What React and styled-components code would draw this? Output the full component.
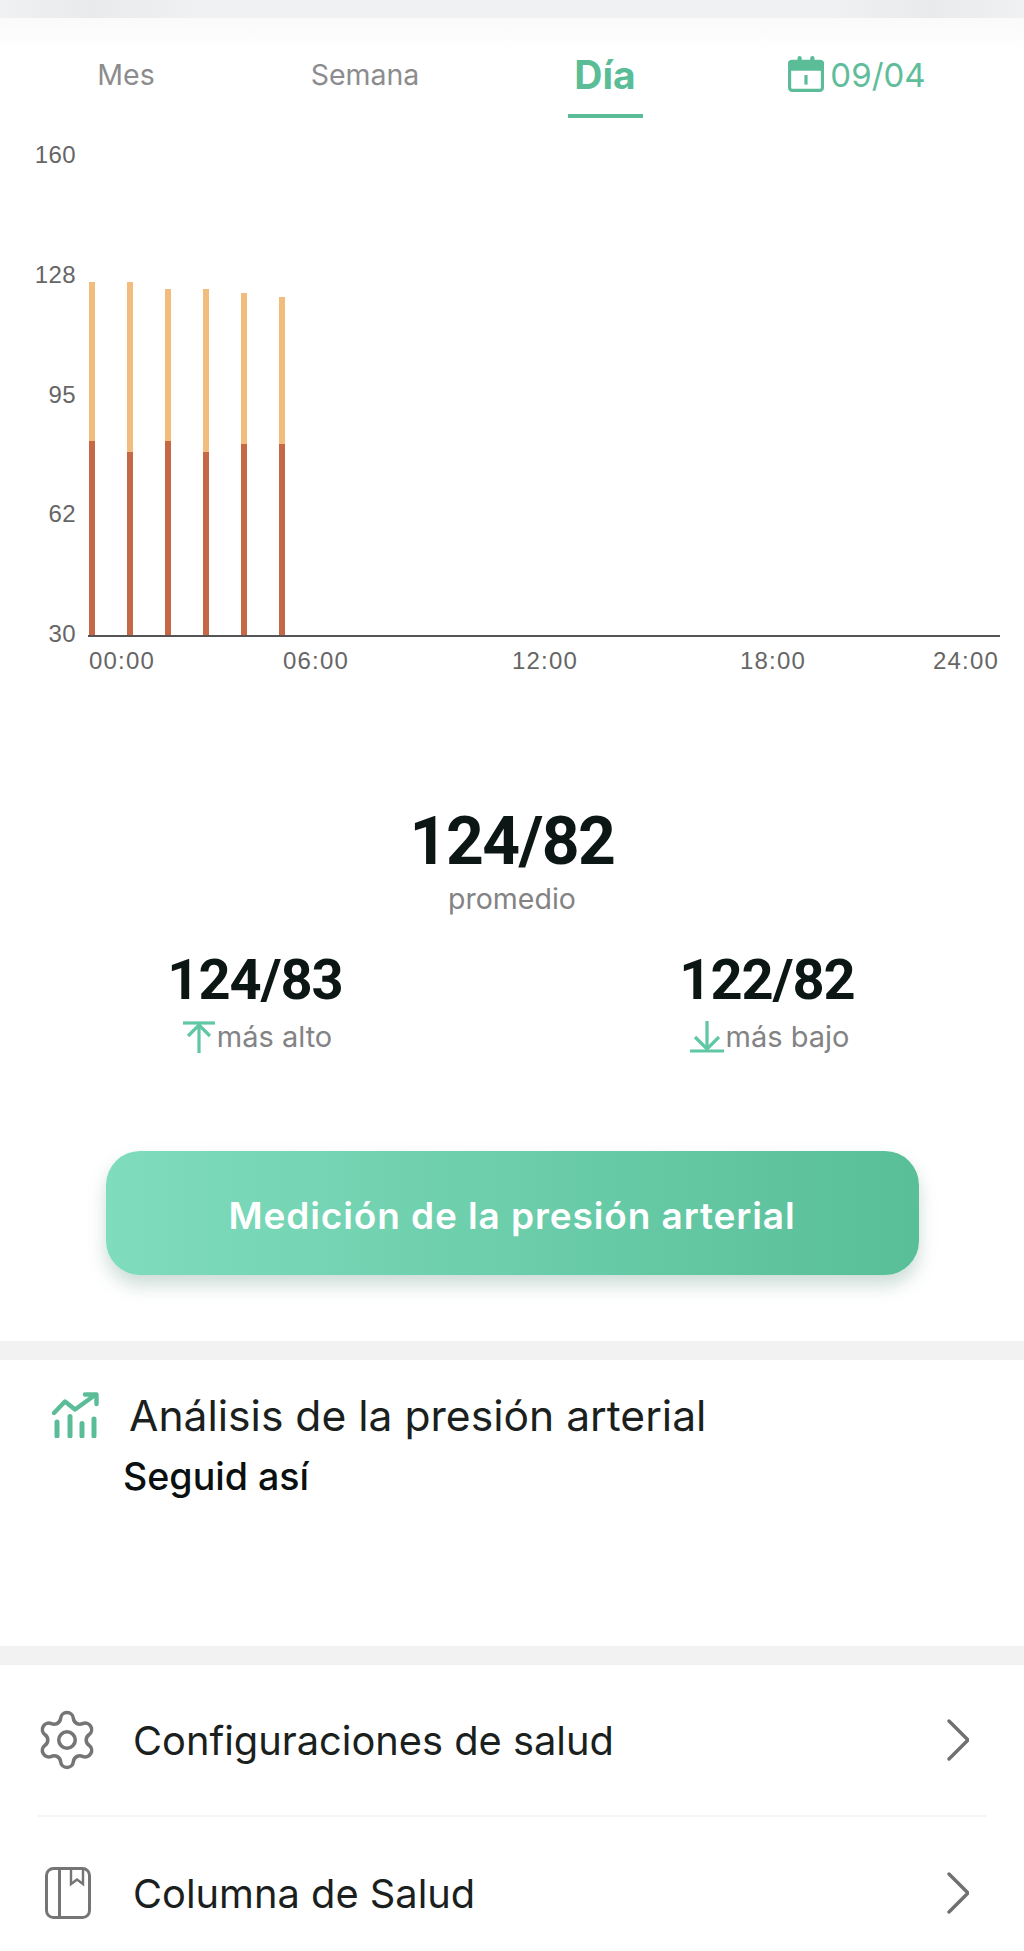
import React from 'react';
import styled, { createGlobalStyle } from 'styled-components';
import { Settings } from 'lucide-react';

const Global = createGlobalStyle`
  html, body { margin: 0; padding: 0; background: #fff; }
  * { box-sizing: border-box; }
  body { font-family: Inter, "Liberation Sans", Arial, sans-serif; }
`;
const Page = styled.div`
  width: 1024px; height: 1951px; overflow: hidden; background: #fff;
  display: flex; flex-direction: column;
`;
const TopBar = styled.div`
  height: 18px; flex: none;
  background: linear-gradient(90deg, #f0f1f2 0, #e9eaeb 90px, #f0f1f3 200px, #f0f1f3 830px, #e9eaeb 930px, #f0f1f2 100%);
`;
const TabFade = styled.div`
  height: 100px; flex: none;
  background: linear-gradient(180deg, #fafafa 0, #ffffff 34px);
  display: grid; grid-template-columns: 252px 226px 254px 250px; align-items: start;
`;
const Tab = styled.div`
  position: relative; height: 100px; display: flex; justify-content: center; align-items: center;
  padding-top: 12px; gap: 6px;
  color: ${p => p.$active ? '#5bbd98' : '#8c8c8e'};
  font-size: ${p => p.$active ? '39px' : '28.5px'};
  font-weight: ${p => p.$active ? 700 : 400};
`;
const Underline = styled.span`
  position: absolute; left: 50%; margin-left: -37px; top: 96px; width: 75px; height: 4px; background: #5bbd98;
`;
const DateText = styled.span`
  font-size: 33px; color: #5fbd9b; line-height: 1; margin-top: 2px;
`;
const Chart = styled.section`
  display: grid; grid-template-columns: 88px 912px; grid-template-rows: 495px auto; height: 689px; flex: none; padding-top: 24px; align-content: start;
`;
const YAxis = styled.div`
  height: 505px; display: flex; flex-direction: column; justify-content: space-between; align-items: flex-end; padding-right: 12px;
  font-family: "Liberation Sans", Arial, sans-serif; font-size: 24px; letter-spacing: 0.4px; line-height: 26px; color: #666;
`;
const Plot = styled.div`
  height: 495px; display: flex; align-items: flex-end; gap: 32px; padding-left: 1px;
  border-bottom: 2px solid #555;
`;
const Bar = styled.div`
  width: 6px; display: flex; flex-direction: column; background: #f2bc7d;
  height: ${p => p.$total}px; justify-content: flex-end;
`;
const BarLow = styled.div`
  background: #c66745; height: ${p => p.$h}px;
`;
const XAxis = styled.div`
  grid-column: 2; display: grid; grid-template-columns: 194px 229px 228px 193px auto; padding-left: 1px; margin-top: 10px;
  font-family: "Liberation Sans", Arial, sans-serif; font-size: 24px; line-height: 28px; letter-spacing: 1.2px; color: #666;
`;
const Stats = styled.section`
  height: 534px; flex: none; display: flex; flex-direction: column; align-items: center;
`;
const BigValue = styled.div`
  font-family: Roboto, sans-serif; font-weight: 700; font-size: 66px; line-height: 70px; color: #0c1614;
  letter-spacing: -1.5px;
`;
const Caption = styled.div`
  font-size: ${p => p.$size || 29}px; line-height: 34px; margin-top: ${p => p.$top || 0}px; padding-left: ${p => p.$indent || 0}px;
  color: #838385; display: flex; align-items: center; gap: 2px;
`;
const SubRow = styled.div`
  width: 100%; margin-top: 34px; display: grid; grid-template-columns: 510px 514px;
`;
const SubCell = styled.div`
  display: flex; flex-direction: column; align-items: center;
`;
const SubValue = styled(BigValue)`
  font-size: 56px; line-height: 60px; letter-spacing: -1px;
`;
const MeasureButton = styled.div`
  margin-top: 97px; width: 813px; height: 124px; border-radius: 34px; flex: none;
  background: linear-gradient(90deg, #7fdcbd 0, #58bf98 100%);
  box-shadow: 0 10px 18px rgba(70, 130, 110, 0.28);
  color: #fff; font-size: 37px; font-weight: 600; letter-spacing: 0.9px;
  display: flex; align-items: center; justify-content: center; padding-top: 4px;
`;
const Band = styled.div`
  height: 19px; flex: none; background: #f2f2f3;
`;
const Analysis = styled.section`
  height: 286px; flex: none; padding: 32px 0 0 52px;
`;
const AnalysisHead = styled.div`
  display: flex; align-items: center; gap: 30px; height: 46px;
  font-size: 42.6px; color: #1b1f1e;
`;
const AnalysisText = styled.div`
  margin: 19px 0 0 71px; font-size: 37.6px; font-weight: 500; line-height: 40px; color: #0a100f;
`;
const List = styled.section`
  padding: 0 38px;
`;
const Row = styled.div`
  height: 152px; display: flex; align-items: center; gap: 38px; padding-left: 3px; padding-right: 17px;
  font-size: 39.8px; color: #1b1f1e;
  border-bottom: ${p => p.$last ? 'none' : '2px solid #f4f4f4'};
`;
const RowIcon = styled.div`
  width: 54px; height: 54px; flex: none; display: flex; align-items: center; justify-content: center; color: #757575;
`;
const GearIcon = styled(Settings)`
  flex: none; margin-left: -2px;
`;
const RowLabel = styled.span`
  flex: 1;
`;

const CalendarIcon = () => (
  <svg width="36" height="36" viewBox="0 0 34 34" fill="none">
    <rect x="9" y="0" width="4" height="8" rx="2" fill="#5bbd98" />
    <rect x="21" y="0" width="4" height="8" rx="2" fill="#5bbd98" />
    <path d="M3 4h28a3 3 0 0 1 3 3v7H0V7a3 3 0 0 1 3-3z" fill="#5bbd98" />
    <rect x="1.5" y="5" width="31" height="27.5" rx="2.5" stroke="#5bbd98" strokeWidth="3" />
    <rect x="15.5" y="18" width="3" height="9" fill="#5bbd98" />
  </svg>
);
const UpIcon = () => (
  <svg width="32" height="32" viewBox="0 0 32 32" fill="none" stroke="#5fc7a3" strokeWidth="3.2">
    <path d="M0 2h32" /><path d="M16 3v29" /><path d="M5 15 16 4l11 11" />
  </svg>
);
const DownIcon = () => (
  <svg width="34" height="32" viewBox="0 0 34 32" fill="none" stroke="#5fc7a3" strokeWidth="3.2">
    <path d="M0 30h34" /><path d="M17 0v28" /><path d="M5 16l12 12 12-12" />
  </svg>
);
const TrendIcon = () => (
  <svg width="47" height="46" viewBox="0 0 47 46" fill="none" stroke="#5bbd98" strokeLinecap="round">
    <path d="M2 21 13 9.5l10 8L43 3" strokeWidth="4.4" strokeLinejoin="round" />
    <path d="M33 2.5h11.5V12" strokeWidth="4.4" strokeLinejoin="round" />
    <path d="M5 30v14M18 24.5V44M30 31.5V44M42 27v17" strokeWidth="5" />
  </svg>
);
const BookIcon = () => (
  <svg width="46" height="52" viewBox="0 0 46 52" fill="none" stroke="#757575" strokeWidth="3">
    <rect x="1.5" y="1.5" width="43" height="49" rx="7" />
    <path d="M14.5 2v48" />
    <path d="M26 2v15l6-4.5 6 4.5V2" strokeWidth="2.4" />
  </svg>
);
const ChevronIcon = () => (
  <svg width="22" height="42" viewBox="0 0 22 42" fill="none" stroke="#707070" strokeWidth="3.4" strokeLinecap="round" strokeLinejoin="round">
    <path d="M2 2l19 19L2 40" />
  </svg>
);

const bars = [
  { total: 353, low: 194 },
  { total: 353, low: 183 },
  { total: 346, low: 194 },
  { total: 346, low: 183 },
  { total: 342, low: 191 },
  { total: 338, low: 191 },
];

export default function App() {
  return (
    <Page>
      <Global />
      <TopBar />
      <TabFade>
        <Tab>Mes</Tab>
        <Tab>Semana</Tab>
        <Tab $active>Día<Underline /></Tab>
        <Tab><CalendarIcon /><DateText>09/04</DateText></Tab>
      </TabFade>
      <Chart>
        <YAxis>
          <span>160</span><span>128</span><span>95</span><span>62</span><span>30</span>
        </YAxis>
        <Plot>
          {bars.map((b, i) => (
            <Bar key={i} $total={b.total}><BarLow $h={b.low} /></Bar>
          ))}
        </Plot>
        <XAxis>
          <span>00:00</span><span>06:00</span><span>12:00</span><span>18:00</span><span>24:00</span>
        </XAxis>
      </Chart>
      <Stats>
        <BigValue>124/82</BigValue>
        <Caption $top={5} $size={28.5}>promedio</Caption>
        <SubRow>
          <SubCell>
            <SubValue>124/83</SubValue>
            <Caption $top={10} $indent={5}><UpIcon />más alto</Caption>
          </SubCell>
          <SubCell>
            <SubValue>122/82</SubValue>
            <Caption $top={10} $indent={5}><DownIcon />más bajo</Caption>
          </SubCell>
        </SubRow>
        <MeasureButton>Medición de la presión arterial</MeasureButton>
      </Stats>
      <Band />
      <Analysis>
        <AnalysisHead><TrendIcon />Análisis de la presión arterial</AnalysisHead>
        <AnalysisText>Seguid así</AnalysisText>
      </Analysis>
      <Band />
      <List>
        <Row>
          <RowIcon><GearIcon size={66} strokeWidth={1.3} /></RowIcon>
          <RowLabel>Configuraciones de salud</RowLabel>
          <ChevronIcon />
        </Row>
        <Row $last>
          <RowIcon><BookIcon /></RowIcon>
          <RowLabel>Columna de Salud</RowLabel>
          <ChevronIcon />
        </Row>
      </List>
    </Page>
  );
}
